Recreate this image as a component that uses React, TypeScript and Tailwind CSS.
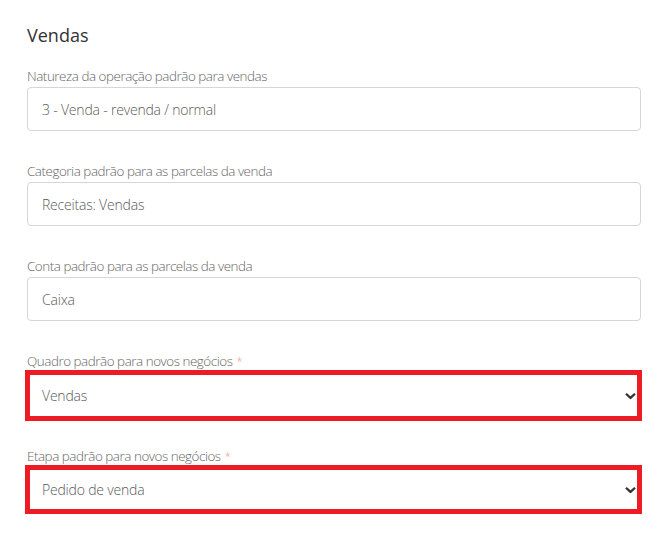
import React from "react";

const Chevron = () => (
  <svg width="11" height="7" viewBox="0 0 11 7" className="absolute right-[1px] top-1/2 -translate-y-1/2 pointer-events-none">
    <path d="M1 1.2 L5.5 5.4 L10 1.2" fill="none" stroke="#333" strokeWidth="2.2" />
  </svg>
);

function TextField({ label, value }: { label: string; value: string }) {
  return (
    <div className="flex flex-col mb-[30px]">
      <label className="text-[13.4px] tracking-[-0.45px] font-light leading-[20px] text-[#666] mb-[1px]">{label}</label>
      <div className="h-[44px] w-[614px] border border-[#d6d6d6] rounded-[4px] flex items-center pl-[14px] text-[14px] tracking-[-0.2px] font-light text-[#5a5a5a]">
        {value}
      </div>
    </div>
  );
}

function SelectField({ label, value, h, mb }: { label: string; value: string; h: number; mb: number }) {
  return (
    <div className="flex flex-col" style={{ marginBottom: mb }}>
      <label className="text-[13.4px] tracking-[-0.45px] font-light leading-[20px] text-[#666] -mb-[1px]">
        {label}
        <span className="text-[#f0907f] text-[11px] ml-[4px] align-top">*</span>
      </label>
      <div
        className="relative -ml-[2px] w-[617px] border-[5px] border-[#ed1c24] bg-white flex items-center pl-[12px] pr-[6px] text-[14px] tracking-[-0.2px] font-light text-[#5a5a5a]"
        style={{ height: h }}
      >
        {value}
        <Chevron />
      </div>
    </div>
  );
}

export default function App() {
  return (
    <div
      className="w-[666px] h-[549px] bg-white pl-[27px] pt-[23px]"
      style={{ fontFamily: '"Open Sans", "Noto Sans", sans-serif' }}
    >
      <h2 className="text-[18px] leading-[24px] text-[#333] mb-[19px]">Vendas</h2>
      <TextField label="Natureza da operação padrão para vendas" value="3 - Venda - revenda / normal" />
      <TextField label="Categoria padrão para as parcelas da venda" value="Receitas: Vendas" />
      <TextField label="Conta padrão para as parcelas da venda" value="Caixa" />
      <SelectField label="Quadro padrão para novos negócios" value="Vendas" h={51} mb={25} />
      <SelectField label="Etapa padrão para novos negócios" value="Pedido de venda" h={49} mb={0} />
    </div>
  );
}
